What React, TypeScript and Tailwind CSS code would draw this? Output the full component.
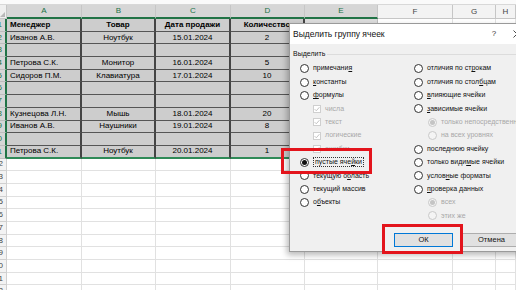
import React from "react";

const FONT = { fontFamily: '"Liberation Sans", Arial, sans-serif' };

const letters = ["A", "B", "C", "D", "E", "F", "G", "H"];

const data: (string[] | null)[] = [
  ["Менеджер", "Товар", "Дата продажи", "Количество"],
  ["Иванов А.В.", "Ноутбук", "15.01.2024", "2"],
  null,
  ["Петрова С.К.", "Монитор", "16.01.2024", "5"],
  ["Сидоров П.М.", "Клавиатура", "17.01.2024", "10"],
  null,
  null,
  ["Кузнецова Л.Н.", "Мышь", "18.01.2024", "20"],
  ["Иванов А.В.", "Наушники", "19.01.2024", "8"],
  null,
  ["Петрова С.К.", "Ноутбук", "20.01.2024", "1"],
];

const TOTAL_ROWS = 22;

function Sheet() {
  const cells: React.ReactNode[] = [];

  // header row
  cells.push(
    <div key="corner" className="relative border-r border-b border-[#c6c6c6] bg-[#efefef]">
      <span className="absolute right-[1px] bottom-[1px] h-0 w-0 border-l-[5px] border-t-[5px] border-l-transparent border-t-transparent border-r-0 border-b-[5px] border-b-[#b8b8b8]" />
    </div>
  );
  letters.forEach((l, i) => {
    const sel = i < 5;
    cells.push(
      <div
        key={"h" + l}
        className={
          sel
            ? "flex items-center justify-center border-r border-[#c6c6c6] border-b-2 border-b-[#217346] bg-[#d6d6d6] text-[8px] text-[#217346]"
            : "flex items-center justify-center border-r border-b border-[#c6c6c6] bg-[#f3f3f3] text-[8px] text-[#444]"
        }
      >
        {l}
      </div>
    );
  });

  for (let r = 0; r < TOTAL_ROWS; r++) {
    const sel = r < 11;
    const row = data[r];
    cells.push(
      <div
        key={"rh" + r}
        className={
          sel
            ? "flex items-center justify-end overflow-hidden border-r-2 border-r-[#217346] border-b border-b-[#bdbdbd] bg-[#d6d6d6] pr-[3px] text-[8px] text-[#217346]"
            : "flex items-center justify-end overflow-hidden border-r border-b border-[#d0d0d0] bg-[#f3f3f3] pr-[3px] text-[8px] text-[#444]"
        }
      >
        <span className="shrink-0">{r + 1}</span>
      </div>
    );
    for (let c = 0; c < 8; c++) {
      const inTable = sel && c < 4;
      const last = r === 10 && c < 5;
      let cls = "flex items-center overflow-visible whitespace-nowrap text-[8px] text-black ";
      if (inTable) {
        cls += last
          ? "border-r-2 border-r-[#444] border-b-2 border-b-[#2f8a57] bg-[#cdcdcd] "
          : "border-r-2 border-r-[#444] border-b border-b-[#555] bg-[#cdcdcd] ";
      } else if (sel && c === 4) {
        cls += last
          ? "border-r border-r-[#bdbdbd] border-b-2 border-b-[#2f8a57] bg-[#dcdcdc] "
          : "border-r border-b border-[#bdbdbd] bg-[#dcdcdc] ";
      } else {
        cls += "border-r border-b border-[#e1e1e1] bg-white ";
      }
      if (c === 0) cls += "justify-start pl-[3px] ";
      else cls += "justify-center ";
      if (r === 0) cls += "font-bold ";
      cells.push(
        <div key={"c" + r + "-" + c} className={cls}>
          {row && c < 4 ? row[c] : ""}
        </div>
      );
    }
  }

  return (
    <div style={FONT}>
      <div className="h-[5px] border-b border-[#d8d8d8] bg-[#fafafa]" />
      <div className="grid grid-cols-[7px_75px_74px_75px_74px_73px_75px_43px_1fr] grid-rows-[14px] auto-rows-[12.7px]">
        {cells}
      </div>
    </div>
  );
}

function U({ text, u }: { text: string; u?: number }) {
  if (u === undefined) return <>{text}</>;
  return (
    <>
      {text.slice(0, u)}
      <span className="underline underline-offset-[1px]">{text[u]}</span>
      {text.slice(u + 1)}
    </>
  );
}

function Radio({ checked, disabled }: { checked?: boolean; disabled?: boolean }) {
  return (
    <span
      className={
        disabled
          ? "flex h-[9px] w-[9px] shrink-0 items-center justify-center rounded-full border border-[#c9c9c9] bg-[#f4f4f4]"
          : "flex h-[9px] w-[9px] shrink-0 items-center justify-center rounded-full border border-[#333] bg-white"
      }
    >
      {checked && (
        <span
          className={
            disabled ? "h-[5px] w-[5px] rounded-full bg-[#c4c4c4]" : "h-[5px] w-[5px] rounded-full bg-[#111]"
          }
        />
      )}
    </span>
  );
}

function Check() {
  return (
    <span className="flex h-[8px] w-[8px] shrink-0 items-center justify-center border border-[#cfcfcf] bg-white">
      <svg width="6" height="6" viewBox="0 0 6 6">
        <path d="M0.6 3.1 L2.3 4.8 L5.4 1.2" fill="none" stroke="#bdbdbd" strokeWidth="0.9" />
      </svg>
    </span>
  );
}

type Opt = {
  label: string;
  u?: number;
  kind: "radio" | "check" | "none";
  indent?: boolean;
  checked?: boolean;
  disabled?: boolean;
  focus?: boolean;
};

const leftOpts: Opt[] = [
  { label: "примечания", u: 9, kind: "radio" },
  { label: "константы", u: 0, kind: "radio" },
  { label: "формулы", u: 0, kind: "radio" },
  { label: "числа", kind: "check", indent: true, disabled: true },
  { label: "текст", kind: "check", indent: true, disabled: true },
  { label: "логические", kind: "check", indent: true, disabled: true },
  { label: "ошибки", kind: "check", indent: true, disabled: true },
  { label: "пустые ячейки", u: 10, kind: "radio", checked: true, focus: true },
  { label: "текущую область", u: 9, kind: "radio" },
  { label: "текущий массив", kind: "radio" },
  { label: "объекты", u: 1, kind: "radio" },
  { label: "", kind: "none" },
];

const rightOpts: Opt[] = [
  { label: "отличия по строкам", u: 13, kind: "radio" },
  { label: "отличия по столбцам", u: 15, kind: "radio" },
  { label: "влияющие ячейки", u: 0, kind: "radio" },
  { label: "зависимые ячейки", u: 0, kind: "radio" },
  { label: "только непосредственно", kind: "radio", indent: true, checked: true, disabled: true },
  { label: "на всех уровнях", kind: "radio", indent: true, disabled: true },
  { label: "последнюю ячейку", kind: "radio" },
  { label: "только видимые ячейки", u: 11, kind: "radio" },
  { label: "условные форматы", u: 5, kind: "radio" },
  { label: "проверка данных", u: 0, kind: "radio" },
  { label: "всех", kind: "radio", indent: true, checked: true, disabled: true },
  { label: "этих же", kind: "radio", indent: true, disabled: true },
];

function OptionRow({ o, right }: { o: Opt; right?: boolean }) {
  const indentCls = o.indent ? (right ? "pl-[14px]" : "pl-[13px]") : "";
  return (
    <div className={`flex h-[13.4px] items-center gap-[4px] whitespace-nowrap ${indentCls}`}>
      {o.kind === "radio" && <Radio checked={o.checked} disabled={o.disabled} />}
      {o.kind === "check" && <Check />}
      {o.kind !== "none" && (
        <span
          className={
            o.focus
              ? "border border-dotted border-[#333] px-[1px] leading-[8px] text-[#111]"
              : o.disabled
                ? "text-[#a8a8a8]"
                : "text-[#111]"
          }
        >
          <U text={o.label} u={o.u} />
        </span>
      )}
    </div>
  );
}

function Dialog() {
  return (
    <div
      style={{ fontFamily: '"Liberation Sans", Arial, sans-serif' }}
      className="absolute left-[289px] top-[23px] flex h-[229px] w-[240px] flex-col border border-[#9a9a9a] bg-[#f0f0f0] shadow-[-2px_3px_6px_rgba(0,0,0,0.28)]"
    >
      <div className="flex h-[20px] items-center bg-white pl-[3px] text-[8.5px] text-[#111]">
        <span className="flex-1">Выделить группу ячеек</span>
        <span className="w-[20px] text-center text-[8px] text-[#333]">?</span>
        <svg width="8" height="8" viewBox="0 0 8 8" className="mr-[7px] ml-[9px]">
          <path d="M0.5 0.5 L7.5 7.5 M7.5 0.5 L0.5 7.5" stroke="#333" strokeWidth="0.9" />
        </svg>
      </div>
      <div className="flex flex-1 flex-col px-[3px] pt-[5px] text-[7px]">
        <div className="flex h-[10px] items-center gap-[2px]">
          <span className="text-[#111]">Выделить</span>
          <span className="h-px flex-1 bg-[#dcdcdc]" />
        </div>
        <div className="mt-[3px] grid grid-cols-[114px_1fr] pl-[7px]">
          <div className="flex flex-col">
            {leftOpts.map((o, i) => (
              <OptionRow key={i} o={o} />
            ))}
          </div>
          <div className="flex flex-col">
            {rightOpts.map((o, i) => (
              <OptionRow key={i} o={o} right />
            ))}
          </div>
        </div>
        <div className="mt-[10px] flex gap-[9px] pl-[101px]">
          <button className="flex h-[14px] w-[59px] items-center justify-center border border-[#0078d7] bg-[#e1e1e1] text-[7.5px] text-[#111]">
            ОК
          </button>
          <button className="flex h-[14px] w-[59px] items-center justify-center border border-[#adadad] bg-[#e1e1e1] text-[7.5px] text-[#111]">
            Отмена
          </button>
        </div>
      </div>
    </div>
  );
}

export default function App() {
  return (
    <div className="relative h-[290px] w-[516px] overflow-hidden bg-white">
      <Sheet />
      <Dialog />
      <div className="absolute left-[281px] top-[148px] h-[26px] w-[91px] border-[3px] border-[#e3141c]" />
      <div className="absolute left-[382px] top-[224px] h-[30px] w-[81px] border-[3px] border-[#e3141c]" />
    </div>
  );
}
